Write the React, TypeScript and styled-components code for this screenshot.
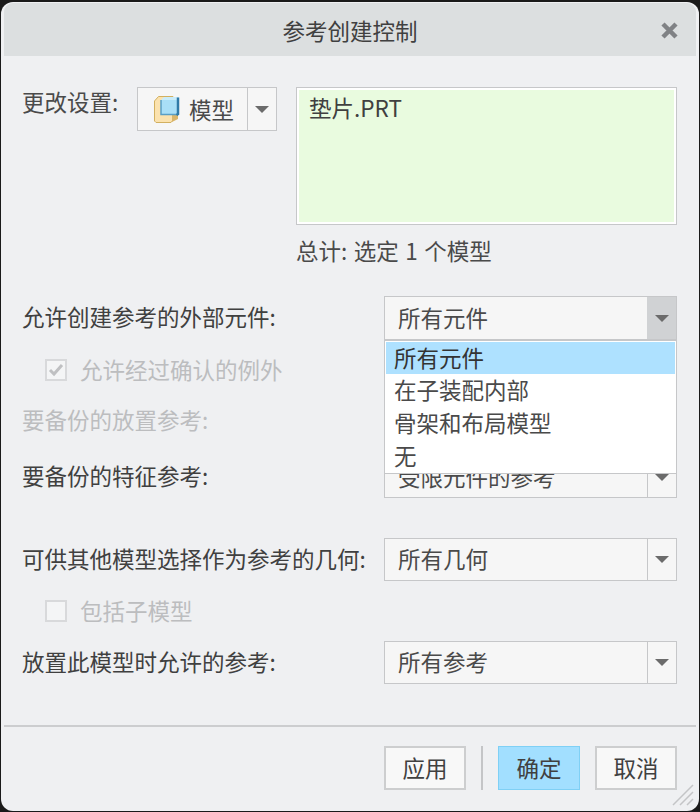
import React from 'react';
import styled, { createGlobalStyle } from 'styled-components';

const GlobalStyle = createGlobalStyle`
  html, body {
    margin: 0;
    padding: 0;
    background: #1a1a1a;
  }
`;

const Dialog = styled.div`
  position: relative;
  box-sizing: border-box;
  width: 698px;
  height: 809px;
  margin: 2px 0 0 1px;
  padding: 1px 3px 0;
  background: #eff0f2;
  border-radius: 12px;
  overflow: hidden;
  color: #4a4a4a;
  font-family: "Noto Sans CJK SC", "Noto Sans", sans-serif;
  font-size: 22.5px;
`;

const TitleBar = styled.div`
  position: relative;
  display: flex;
  align-items: center;
  justify-content: center;
  height: 53px;
  background: #dcdfe0;
  border-radius: 9px 9px 0 0;
`;

const Title = styled.span`
  color: #404040;
`;

const CloseIcon = styled.svg`
  position: absolute;
  right: 18px;
  top: 19px;
`;

const Body = styled.div`
  display: flex;
  flex-direction: column;
  padding: 31px 19px 0 18px;
`;

const TopGrid = styled.div`
  display: grid;
  grid-template-columns: 115px 140px 1fr;
  align-items: start;
`;

const TopLabel = styled.div`
  line-height: 28px;
`;

const ModelButton = styled.div`
  box-sizing: border-box;
  display: flex;
  width: 140px;
  height: 44px;
  background: #f6f6f6;
  border: 1px solid #c6c7c9;
`;

const ModelFace = styled.div`
  flex: 1;
  display: flex;
  align-items: center;
  gap: 9px;
  padding-left: 15px;
`;

const ArrowCell = styled.div<{ $active?: boolean }>`
  box-sizing: border-box;
  display: flex;
  align-items: center;
  justify-content: center;
  width: 29px;
  height: 100%;
  background: ${(p) => (p.$active ? '#d0d2d4' : 'transparent')};
  border-left: 1px solid ${(p) => (p.$active ? '#d0d2d4' : '#c6c7c9')};
`;

const Arrow = styled.span`
  display: block;
  width: 0;
  height: 0;
  border-left: 7px solid transparent;
  border-right: 7px solid transparent;
  border-top: 7px solid #6b6b6b;
`;

const ListColumn = styled.div`
  margin-left: 19px;
`;

const ModelList = styled.div`
  box-sizing: border-box;
  height: 138px;
  padding: 2px 12px;
  background: #e9fbdf;
  border: 1px solid #c6c7c9;
  outline: 2px solid #ffffff;
  outline-offset: -3px;
  line-height: 34px;
  color: #404040;
`;

const Summary = styled.div`
  margin-top: 11px;
  line-height: 28px;
  word-spacing: 1.5px;
`;

const Row = styled.div<{ $top: number; $height?: number }>`
  position: relative;
  display: flex;
  align-items: center;
  justify-content: space-between;
  height: ${(p) => p.$height ?? 43}px;
  margin-top: ${(p) => p.$top}px;
`;

const RowLabel = styled.span<{ $muted?: boolean }>`
  padding-bottom: 4px;
  color: ${(p) => (p.$muted ? '#bcbdbf' : '#404040')};
`;

const Select = styled.div`
  position: relative;
  box-sizing: border-box;
  display: flex;
  width: 293px;
  height: 100%;
  background: #f6f6f6;
  border: 1px solid #c6c7c9;
`;

const SelectValue = styled.div`
  flex: 1;
  display: flex;
  align-items: center;
  padding: 0 0 3px 13px;
`;

const Menu = styled.div`
  position: absolute;
  z-index: 2;
  top: 43px;
  left: -1px;
  box-sizing: border-box;
  width: 293px;
  height: 134px;
  padding: 1px;
  background: #ffffff;
  border: 1px solid #c6c7c9;
`;

const MenuItem = styled.div<{ $selected?: boolean }>`
  height: ${(p) => (p.$selected ? 32 : 33)}px;
  padding-left: 8px;
  line-height: 30px;
  background: ${(p) => (p.$selected ? '#aee1ff' : 'transparent')};
  color: ${(p) => (p.$selected ? '#333333' : '#4a4a4a')};
`;

const CheckRow = styled.div<{ $top: number }>`
  display: flex;
  align-items: center;
  gap: 13px;
  height: 22px;
  margin-top: ${(p) => p.$top}px;
  padding-left: 23px;
  color: #bcbdbf;
`;

const CheckBox = styled.span`
  box-sizing: border-box;
  display: flex;
  align-items: center;
  justify-content: center;
  width: 22px;
  height: 22px;
  background: #f4f5f6;
  border: 2px solid #d8d9db;
`;

const CheckText = styled.span`
  padding-bottom: 2px;
`;

const Separator = styled.div`
  height: 2px;
  margin-top: 41px;
  background: #cccdcf;
`;

const Footer = styled.div`
  display: flex;
  align-items: center;
  justify-content: flex-end;
  gap: 15px;
  padding: 19px 19px 0 0;
`;

const Button = styled.div<{ $primary?: boolean }>`
  box-sizing: border-box;
  display: flex;
  align-items: center;
  justify-content: center;
  width: 82px;
  height: 44px;
  padding-bottom: 3px;
  background: ${(p) => (p.$primary ? '#a2dfff' : '#f8f8f8')};
  border: ${(p) => (p.$primary ? '1px solid #7fd0f5' : '2px solid #cdcecf')};
  color: #404040;
`;

const ButtonDivider = styled.span`
  width: 2px;
  height: 44px;
  background: #c4c5c7;
`;

const Grip = styled.svg`
  position: absolute;
  right: 5px;
  bottom: 5px;
`;

function ModelIcon() {
  return (
    <svg width="27" height="27" viewBox="0 0 27 27">
      <path d="M1.5 5 L5.5 0.5 H20 V24 L18 26.5 H3 L1.5 25 Z" fill="#fbe2ae" stroke="#d2b060" strokeWidth="1" />
      <path d="M19 19 H25 V23 L19 26 Z" fill="#d9b56a" />
      <path d="M8 4 L11 1 H26 L24 4 Z" fill="#c9ecfa" />
      <rect x="8" y="4" width="16" height="14" fill="#a9dff7" />
      <path d="M8 4 V18.5 H24.5" fill="none" stroke="#5a9fc6" strokeWidth="1.5" />
      <path d="M25 1.5 V18 L23.5 19" fill="none" stroke="#2f7aa8" strokeWidth="2.5" />
    </svg>
  );
}

export default function App() {
  return (
    <>
      <GlobalStyle />
      <Dialog>
        <TitleBar>
          <Title>参考创建控制</Title>
          <CloseIcon width="17" height="17" viewBox="0 0 17 17">
            <path d="M2 2 L15 15 M15 2 L2 15" stroke="#808285" strokeWidth="4.5" />
          </CloseIcon>
        </TitleBar>
        <Body>
          <TopGrid>
            <TopLabel>更改设置:</TopLabel>
            <ModelButton>
              <ModelFace>
                <ModelIcon />
                <span>模型</span>
              </ModelFace>
              <ArrowCell>
                <Arrow />
              </ArrowCell>
            </ModelButton>
            <ListColumn>
              <ModelList>垫片.PRT</ModelList>
              <Summary>总计: 选定 1 个模型</Summary>
            </ListColumn>
          </TopGrid>

          <Row $top={32} $height={44}>
            <RowLabel>允许创建参考的外部元件:</RowLabel>
            <Select>
              <SelectValue>所有元件</SelectValue>
              <ArrowCell $active>
                <Arrow />
              </ArrowCell>
              <Menu>
                <MenuItem $selected>所有元件</MenuItem>
                <MenuItem>在子装配内部</MenuItem>
                <MenuItem>骨架和布局模型</MenuItem>
                <MenuItem>无</MenuItem>
              </Menu>
            </Select>
          </Row>
          <CheckRow $top={19}>
            <CheckBox>
              <svg width="16" height="14" viewBox="0 0 16 14">
                <path d="M2 7 L6 11 L14 2" fill="none" stroke="#bfc0c2" strokeWidth="3" />
              </svg>
            </CheckBox>
            <CheckText>允许经过确认的例外</CheckText>
          </CheckRow>
          <Row $top={19} $height={42}>
            <RowLabel $muted>要备份的放置参考:</RowLabel>
          </Row>
          <Row $top={14} $height={42}>
            <RowLabel>要备份的特征参考:</RowLabel>
            <Select>
              <SelectValue>受限元件的参考</SelectValue>
              <ArrowCell>
                <Arrow />
              </ArrowCell>
            </Select>
          </Row>

          <Row $top={40}>
            <RowLabel>可供其他模型选择作为参考的几何:</RowLabel>
            <Select>
              <SelectValue>所有几何</SelectValue>
              <ArrowCell>
                <Arrow />
              </ArrowCell>
            </Select>
          </Row>
          <CheckRow $top={19}>
            <CheckBox />
            <CheckText>包括子模型</CheckText>
          </CheckRow>
          <Row $top={19}>
            <RowLabel>放置此模型时允许的参考:</RowLabel>
            <Select>
              <SelectValue>所有参考</SelectValue>
              <ArrowCell>
                <Arrow />
              </ArrowCell>
            </Select>
          </Row>
        </Body>
        <Separator />
        <Footer>
          <Button>应用</Button>
          <ButtonDivider />
          <Button $primary>确定</Button>
          <Button>取消</Button>
        </Footer>
        <Grip width="22" height="22" viewBox="0 0 22 22">
          <path d="M1 21 L21 1 M8 21 L21 8 M15 21 L21 15" stroke="#c4c5c7" strokeWidth="1.5" />
        </Grip>
      </Dialog>
    </>
  );
}
